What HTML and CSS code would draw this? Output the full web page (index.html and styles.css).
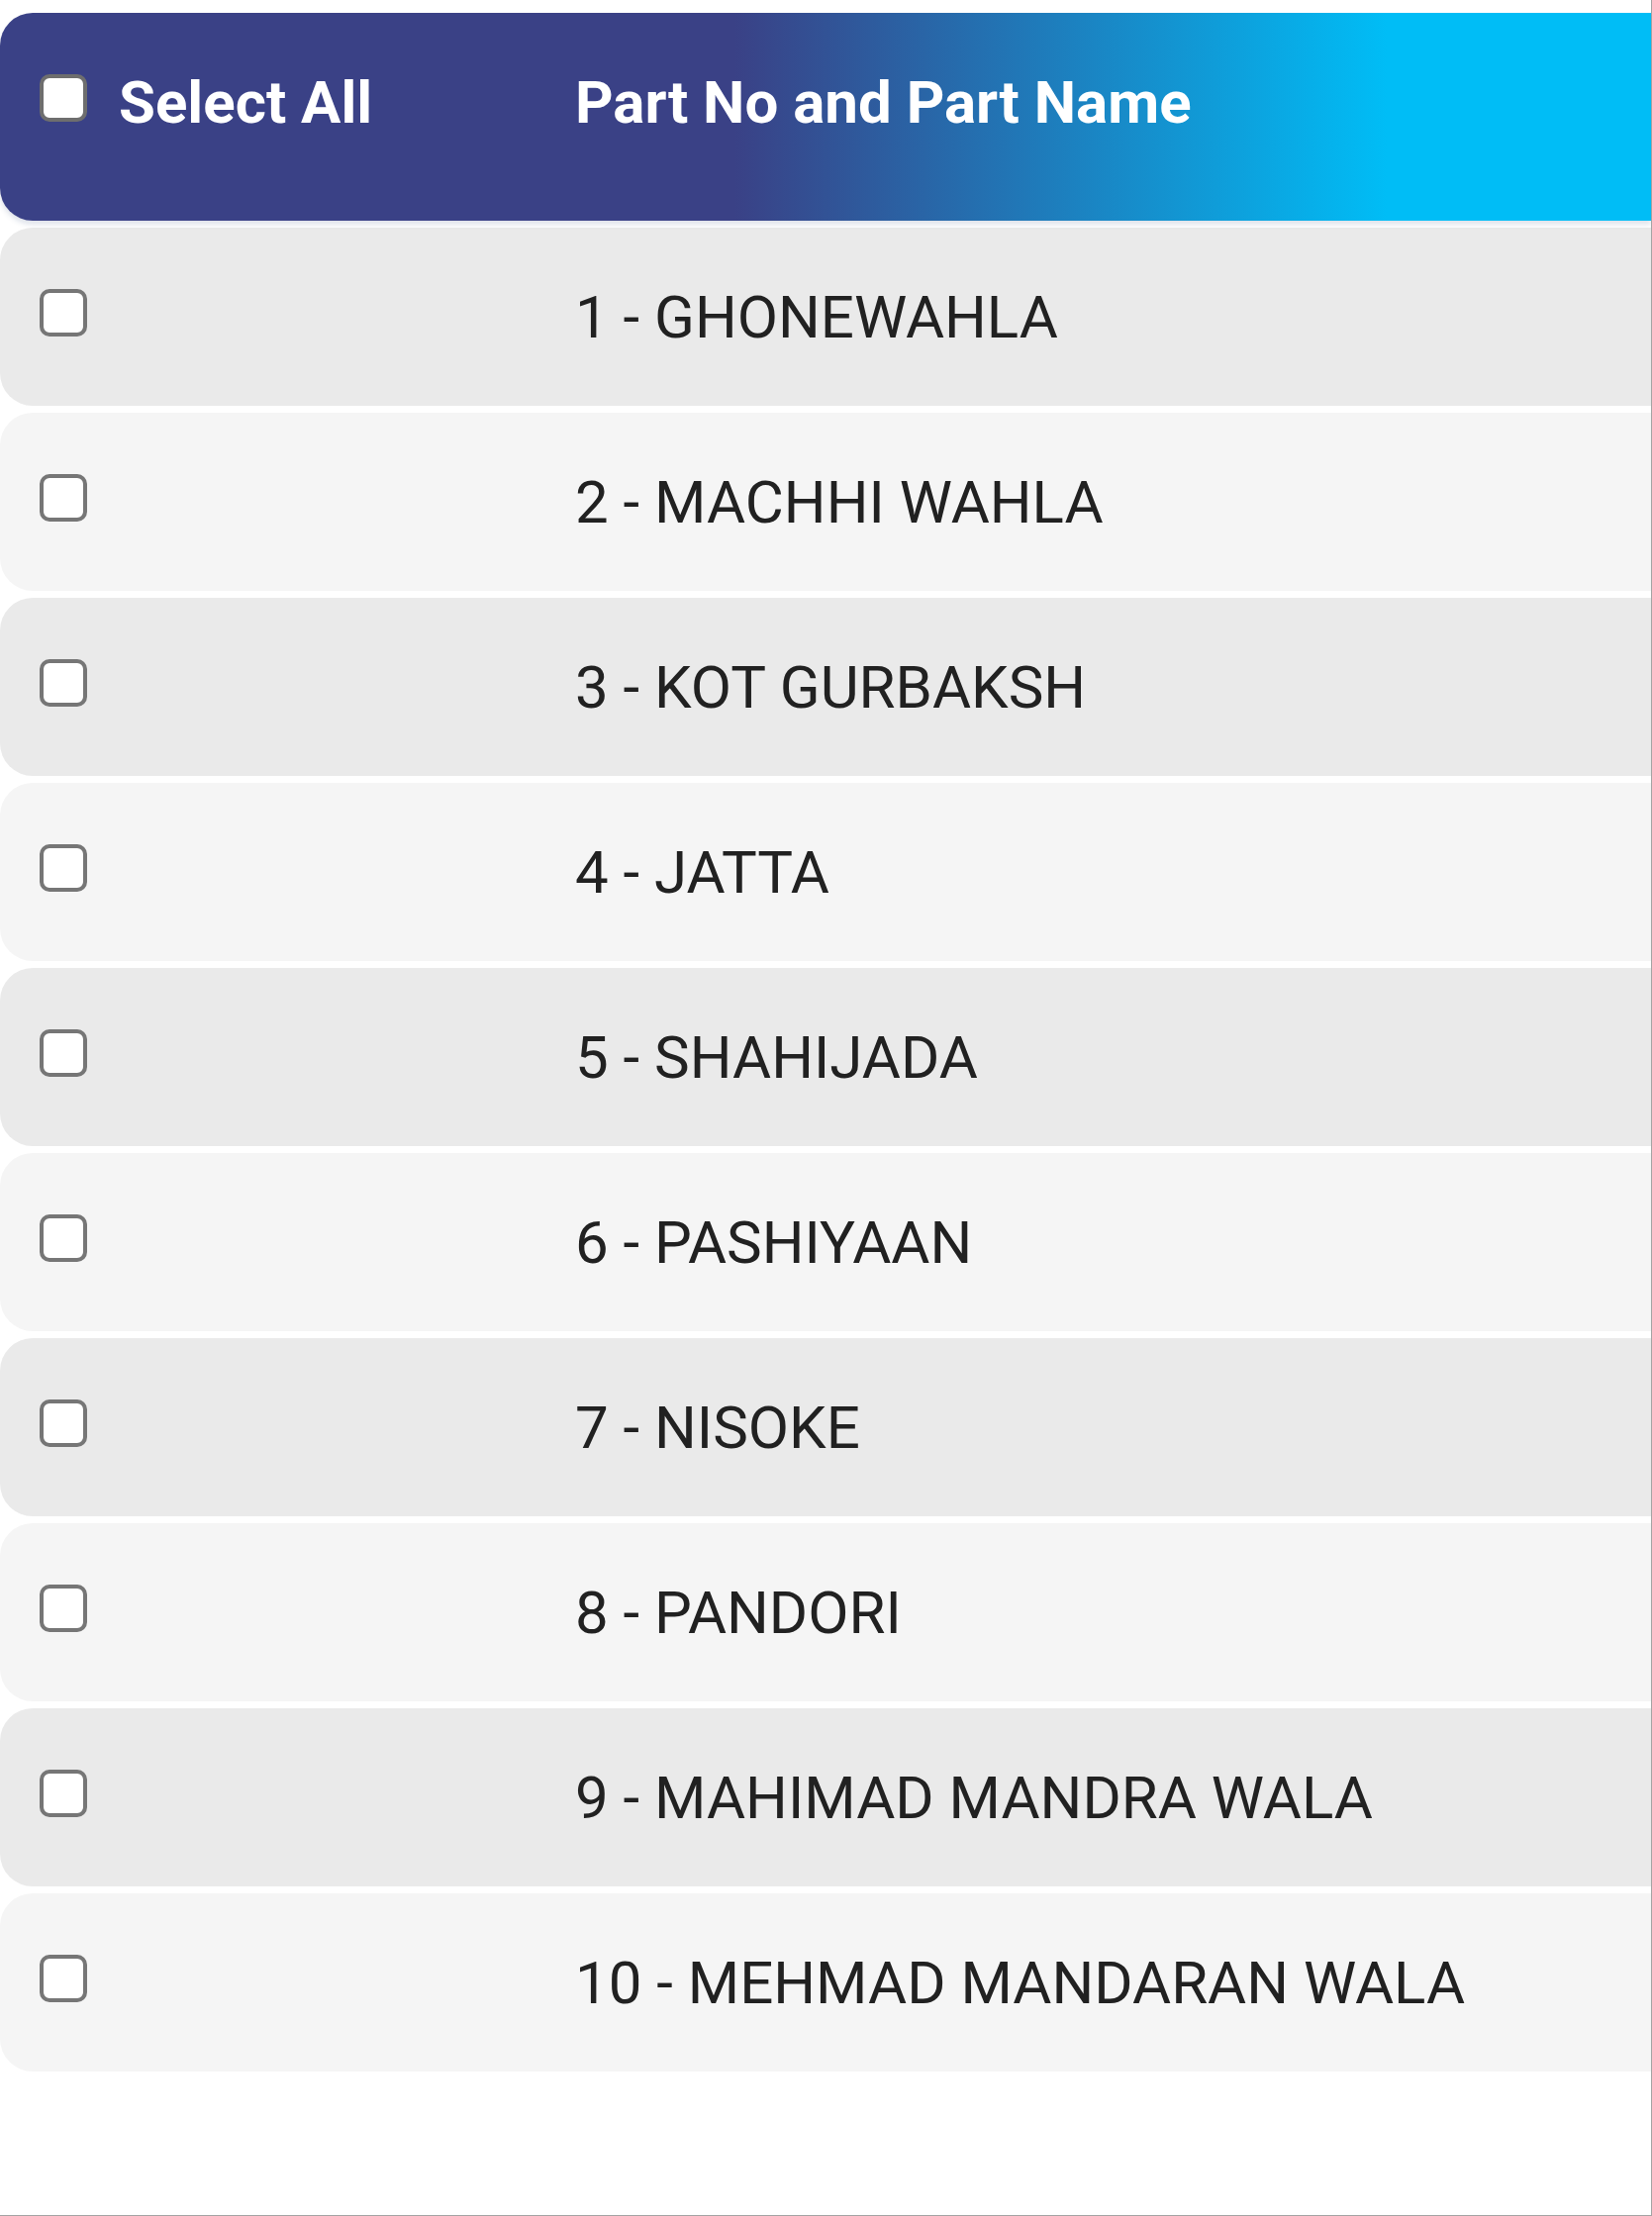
FILE: index.html
```html
<!DOCTYPE html>
<html lang="en">
<head>
<meta charset="utf-8">
<title>Part Selection</title>
<link rel="stylesheet" href="styles.css">
</head>
<body>
<div class="frame">
  <div class="table">
    <div class="head">
      <div class="cell-check head-check">
        <span class="box box-head"></span>
        <span class="head-label">Select All</span>
      </div>
      <div class="cell-name head-label">Part No and Part Name</div>
    </div>
    <div class="row odd"><div class="cell-check"><span class="box"></span></div><div class="cell-name">1 - GHONEWAHLA</div></div>
    <div class="row even"><div class="cell-check"><span class="box"></span></div><div class="cell-name">2 - MACHHI WAHLA</div></div>
    <div class="row odd"><div class="cell-check"><span class="box"></span></div><div class="cell-name">3 - KOT GURBAKSH</div></div>
    <div class="row even"><div class="cell-check"><span class="box"></span></div><div class="cell-name">4 - JATTA</div></div>
    <div class="row odd"><div class="cell-check"><span class="box"></span></div><div class="cell-name">5 - SHAHIJADA</div></div>
    <div class="row even"><div class="cell-check"><span class="box"></span></div><div class="cell-name">6 - PASHIYAAN</div></div>
    <div class="row odd"><div class="cell-check"><span class="box"></span></div><div class="cell-name">7 - NISOKE</div></div>
    <div class="row even"><div class="cell-check"><span class="box"></span></div><div class="cell-name">8 - PANDORI</div></div>
    <div class="row odd"><div class="cell-check"><span class="box"></span></div><div class="cell-name">9 - MAHIMAD MANDRA WALA</div></div>
    <div class="row even"><div class="cell-check"><span class="box"></span></div><div class="cell-name">10 - MEHMAD MANDARAN WALA</div></div>
  </div>
</div>
</body>
</html>
```
FILE: styles.css
```css
html, body {
  margin: 0;
  padding: 0;
  background: #ffffff;
}

.frame {
  box-sizing: border-box;
  width: 1669px;
  height: 2239px;
  padding-top: 13px;
  border-right: 1px solid #a3a3a3;
  border-bottom: 1px solid #a3a3a3;
  background: #ffffff;
  font-family: Roboto, "Noto Sans", "Liberation Sans", sans-serif;
  overflow: hidden;
}

.table {
  display: flex;
  flex-direction: column;
  gap: 7px;
}

.head,
.row {
  display: grid;
  grid-template-columns: 581px 1fr;
  border-radius: 33px 0 0 33px;
}

.head {
  position: relative;
  height: 210px;
  background: linear-gradient(to right, #3a4186 0%, #3a4186 44.5%, #00bdf6 84%, #00bdf6 100%);
  box-shadow: 0 4px 5px rgba(60, 90, 130, 0.16);
}

.row {
  height: 180px;
  color: #212121;
}

.odd {
  background: #eaeaea;
}

.even {
  background: #f5f5f5;
}

.cell-check {
  padding: 62px 0 0 40px;
  box-sizing: border-box;
}

.head-check {
  display: flex;
  align-items: flex-start;
  gap: 32px;
}

.head-check .head-label {
  margin-top: -6px;
}

.cell-name {
  padding-top: 56px;
  font-size: 60px;
  line-height: 70px;
  white-space: nowrap;
}

.head-label {
  color: #ffffff;
  font-size: 60px;
  line-height: 70px;
  font-weight: 700;
  white-space: nowrap;
}

.box {
  display: block;
  box-sizing: border-box;
  width: 48px;
  height: 48px;
  border: 4px solid #767676;
  border-radius: 10px;
  background: #ffffff;
  flex: none;
}

.box-head {
  border-color: #6e6e6e;
}
```
